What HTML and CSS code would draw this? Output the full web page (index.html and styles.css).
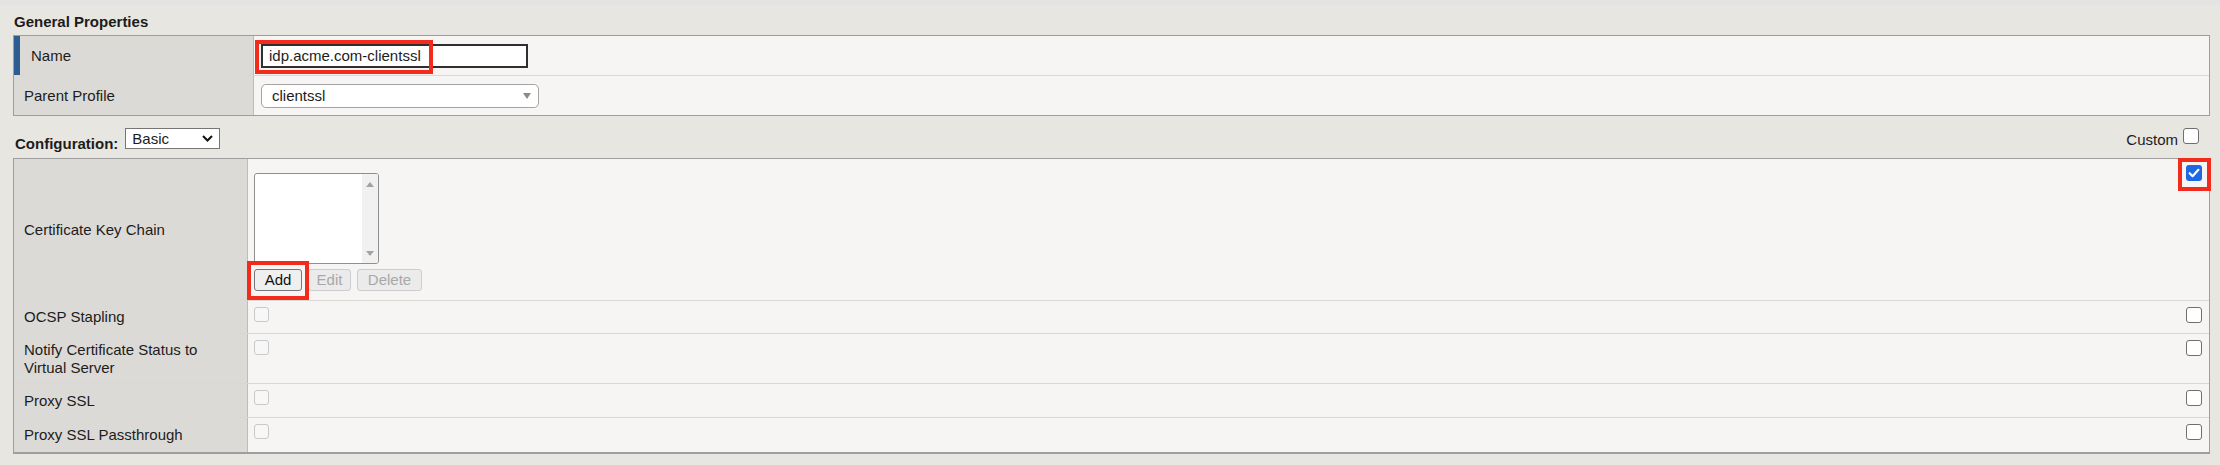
FILE: index.html
```html
<!DOCTYPE html>
<html lang="en">
<head>
<meta charset="utf-8">
<title>Client SSL Profile</title>
<link rel="stylesheet" href="styles.css">
</head>
<body>
<div class="topstrip"></div>
<main class="page">
  <h2 class="section-title">General Properties</h2>
  <div class="props props-general">
    <div class="row row-name">
      <div class="label label-active">Name</div>
      <div class="value">
        <div class="field-wrap">
          <div class="text-input">idp.acme.com-clientssl</div>
          <span class="highlight hl-name"></span>
        </div>
      </div>
    </div>
    <div class="row row-parent">
      <div class="label">Parent Profile</div>
      <div class="value">
        <div class="select-box"><span>clientssl</span><span class="tri-down"></span></div>
      </div>
    </div>
  </div>

  <div class="config-bar">
    <div class="config-left">
      <span class="config-label">Configuration:</span>
      <div class="mini-select"><span>Basic</span>
        <svg class="chev" width="11" height="7" viewBox="0 0 11 7"><path d="M1 1 L5.5 5.5 L10 1" fill="none" stroke="#111" stroke-width="2"/></svg>
      </div>
    </div>
    <div class="custom"><span class="custom-text">Custom</span><span class="cb cb-custom"></span></div>
  </div>

  <div class="props props-config">
    <div class="row r-cert">
      <div class="label">Certificate Key Chain</div>
      <div class="value">
        <div class="chain">
          <div class="listbox">
            <div class="list-area"></div>
            <div class="list-scroll"><span class="tri-up-s"></span><span class="tri-down-s"></span></div>
          </div>
          <div class="btn-row">
            <span class="btn btn-add">Add</span>
            <span class="btn btn-edit is-disabled">Edit</span>
            <span class="btn btn-delete is-disabled">Delete</span>
            <span class="highlight hl-add"></span>
          </div>
        </div>
        <div class="cb-wrap">
          <span class="cb cb-checked">
            <svg width="16" height="16" viewBox="0 0 16 16"><path d="M3.6 8.2 L6.6 11.2 L12.4 4.8" fill="none" stroke="#fff" stroke-width="2.2" stroke-linecap="round" stroke-linejoin="round"/></svg>
          </span>
          <span class="highlight hl-check"></span>
        </div>
      </div>
    </div>
    <div class="row r-ocsp">
      <div class="label">OCSP Stapling</div>
      <div class="value"><span class="cb cb-disabled"></span><span class="cb"></span></div>
    </div>
    <div class="row r-notify">
      <div class="label">Notify Certificate Status to<br>Virtual Server</div>
      <div class="value"><span class="cb cb-disabled"></span><span class="cb"></span></div>
    </div>
    <div class="row r-proxy">
      <div class="label">Proxy SSL</div>
      <div class="value"><span class="cb cb-disabled"></span><span class="cb"></span></div>
    </div>
    <div class="row r-pass">
      <div class="label">Proxy SSL Passthrough</div>
      <div class="value"><span class="cb cb-disabled"></span><span class="cb"></span></div>
    </div>
  </div>
</main>
</body>
</html>
```
FILE: styles.css
```css
* { box-sizing: border-box; }
html, body { margin: 0; padding: 0; }
body {
  width: 2220px;
  height: 465px;
  overflow: hidden;
  background: #e8e6e1;
  font-family: "Liberation Sans", Arial, sans-serif;
  font-size: 15px;
  color: #1c1c1c;
}
.topstrip { height: 5px; background: #e3e3e3; }
.page { padding: 0 10px 0 13px; }
.section-title {
  margin: 8px 0 4px 1px;
  font-size: 15px;
  font-weight: bold;
  line-height: 18px;
}

/* property tables */
.props { border: 1px solid #9e9e9e; background: #f6f5f3; }
.props-config { border-bottom-width: 2px; }
.row { display: flex; border-top: 1px solid #d9d8d5; }
.row:first-child { border-top: none; }
.label {
  flex: none;
  width: 240px;
  background: #dcdad6;
  border-right: 1px solid #bdbcb8;
  display: flex;
  align-items: center;
  padding: 0 10px;
  line-height: 18px;
}
.label-active { border-left: 6px solid #2e5d91; padding-left: 11px; }
.props-config .label { width: 234px; }
.value {
  flex: 1;
  display: flex;
  align-items: center;
  padding: 0 7px;
}
.row-name { height: 39px; }
.row-parent { height: 40px; }

.field-wrap { position: relative; }
.text-input {
  width: 267px;
  height: 24px;
  border: 2px solid #2f2f2f;
  background: #fff;
  padding: 0 6px;
  line-height: 20px;
}
.select-box {
  width: 278px;
  height: 24px;
  border: 1px solid #a3a3a3;
  border-radius: 5px;
  background: #fff;
  padding: 0 7px 0 10px;
  display: flex;
  align-items: center;
  justify-content: space-between;
  line-height: 20px;
}
.tri-down {
  width: 0; height: 0;
  border-left: 4px solid transparent;
  border-right: 4px solid transparent;
  border-top: 6px solid #8a8a8a;
}

/* highlights (annotation boxes) */
.highlight {
  position: absolute;
  border: 4px solid #f32b1d;
  pointer-events: none;
}
.hl-name { left: -6px; top: -4px; width: 178px; height: 34px; }
.hl-add { left: -7px; top: -8px; width: 62px; height: 39px; }
.hl-check { left: -8px; top: -7px; width: 33px; height: 33px; }

/* configuration bar */
.config-bar {
  display: flex;
  justify-content: space-between;
  align-items: flex-end;
  height: 21px;
  margin: 12px 0 9px;
}
.config-left { display: flex; align-items: flex-end; }
.config-label {
  font-weight: bold;
  line-height: 18px;
  margin: 0 7px -4px 2px;
}
.mini-select {
  width: 95px;
  height: 21px;
  border: 1px solid #767676;
  background: #fff;
  display: flex;
  align-items: center;
  justify-content: space-between;
  padding: 0 6px 0 6px;
  line-height: 18px;
}
.chev { display: block; }
.custom { display: flex; align-items: flex-end; margin-right: 11px; }
.custom-text { line-height: 18px; margin-bottom: 0; }
.cb-custom { margin-left: 5px; margin-bottom: 5px; }

/* checkboxes */
.cb {
  display: block;
  flex: none;
  width: 16px;
  height: 16px;
  border: 1px solid #6f6f6f;
  border-radius: 3px;
  background: #fff;
}
.cb-disabled {
  width: 15px;
  height: 15px;
  border-color: #c9c9c9;
  background: #f7f7f7;
}
.cb-checked {
  border: none;
  background: #1f68e3;
  position: relative;
}
.cb-checked svg { display: block; }
.cb-wrap { position: relative; }

/* configuration table */
.props-config .value {
  align-items: flex-start;
  justify-content: space-between;
  padding: 6px 7px 0 6px;
}
.r-cert { height: 141px; }
.r-ocsp { height: 33px; }
.r-notify { height: 50px; }
.r-proxy { height: 34px; }
.r-pass { height: 35px; }

.chain { margin-top: 8px; display: flex; flex-direction: column; gap: 5px; }
.listbox {
  width: 125px;
  height: 91px;
  border: 1px solid #8f8f8f;
  border-radius: 3px;
  background: #fff;
  display: flex;
  overflow: hidden;
}
.list-area { flex: 1; }
.list-scroll {
  width: 16px;
  background: #f1f1f1;
  display: flex;
  flex-direction: column;
  justify-content: space-between;
  align-items: center;
  padding: 8px 0 7px;
}
.tri-up-s {
  width: 0; height: 0;
  border-left: 4px solid transparent;
  border-right: 4px solid transparent;
  border-bottom: 5px solid #a3a3a3;
}
.tri-down-s {
  width: 0; height: 0;
  border-left: 4px solid transparent;
  border-right: 4px solid transparent;
  border-top: 5px solid #a3a3a3;
}
.btn-row { position: relative; display: flex; gap: 6px; }
.btn {
  display: block;
  height: 22px;
  border: 1px solid #767676;
  border-radius: 3px;
  background: #efefef;
  text-align: center;
  line-height: 20px;
  color: #111;
}
.btn-add { width: 48px; }
.btn-edit { width: 43px; }
.btn-delete { width: 65px; }
.is-disabled { border-color: #cdcdcd; background: #ebebeb; color: #a8a8a8; }
```
